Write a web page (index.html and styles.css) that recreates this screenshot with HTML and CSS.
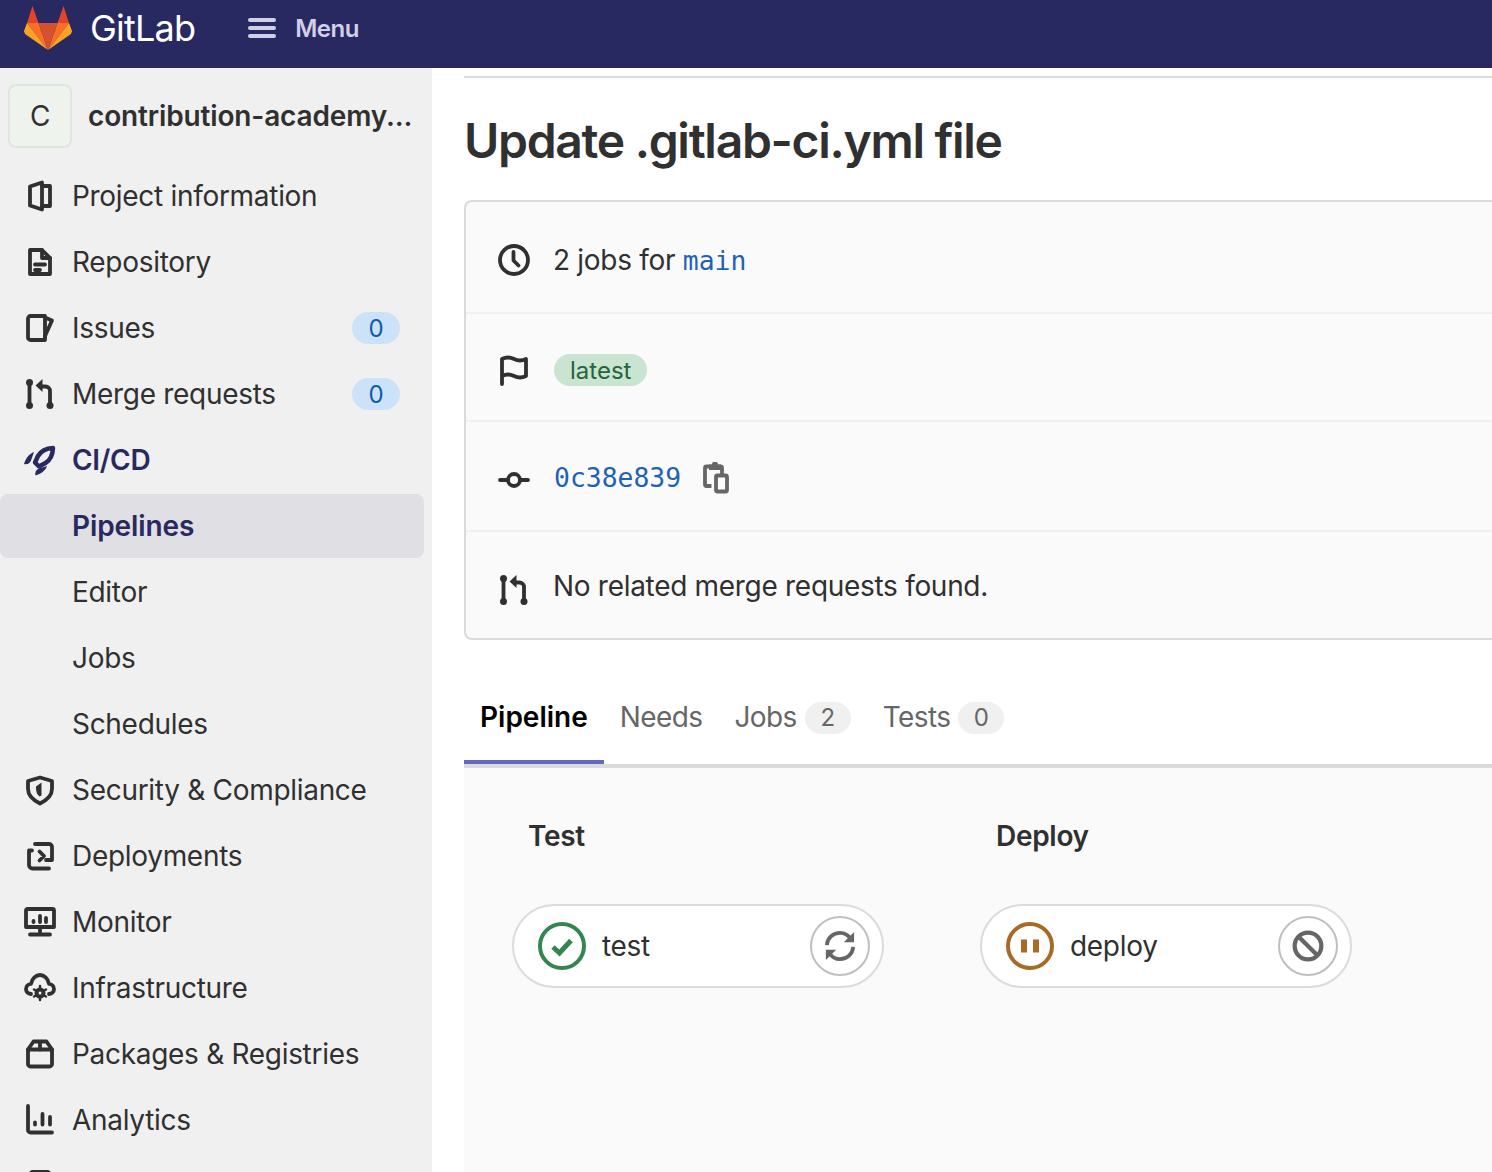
FILE: index.html
```html
<!DOCTYPE html>
<html lang="en">
<head>
<meta charset="utf-8">
<title>Update .gitlab-ci.yml file</title>
<link rel="stylesheet" href="styles.css">
</head>
<body>
<header class="topbar">
  <svg class="logo" viewBox="0 0 48 44" width="48" height="44">
    <polygon fill="#e24329" points="8.5,0 14.5,17 3,17"/>
    <polygon fill="#e24329" points="39.5,0 33.5,17 45,17"/>
    <polygon fill="#fc6d26" points="3,17 14.5,17 24,44"/>
    <polygon fill="#fc6d26" points="45,17 33.5,17 24,44"/>
    <polygon fill="#fca326" points="3,17 0,25 1,28 24,44"/>
    <polygon fill="#fca326" points="45,17 48,25 47,28 24,44"/>
    <polygon fill="#d4512f" points="14.5,17 33.5,17 24,44"/>
  </svg>
  <span class="wordmark">GitLab</span>
  <div class="menu">
    <svg class="burger" viewBox="0 0 28 20" width="28" height="20"><path d="M2 2h24M2 10h24M2 18h24"/></svg>
    <span>Menu</span>
  </div>
</header>
<div class="layout">
  <nav class="sidebar">
    <div class="context">
      <div class="avatar">C</div>
      <div class="context-name">contribution-academy...</div>
    </div>
    <ul class="nav">
      <li class="nav-item"><svg class="icon" viewBox="0 0 32 32"><path d="M6 6.500 18 2.500v27L6 25.500z"/><path d="M18 6h8v20h-8"/></svg><span>Project information</span></li>
      <li class="nav-item"><svg class="icon" viewBox="0 0 32 32"><path d="M6 4h12l8 8v16H6z"/><path d="M18 4v8h8M11 18.500h10M11 24h5"/></svg><span>Repository</span></li>
      <li class="nav-item"><svg class="icon" viewBox="0 0 32 32"><path d="M6.500 4H21v24H6.500A2.500 2.500 0 0 1 4 25.500v-19A2.500 2.500 0 0 1 6.500 4z"/><path d="M21 5.500l7 3L21 24"/></svg><span>Issues</span><b class="count">0</b></li>
      <li class="nav-item"><svg class="icon" viewBox="0 0 32 32"><use href="#mr"/></svg><span>Merge requests</span><b class="count">0</b></li>
      <li class="nav-item current"><svg class="icon rocket" viewBox="0 0 32 32"><path d="M29 4c-7 .3-12 3-15 8l-3 6.500 4 4 6.500-3.500c5-3 7.200-8 7.500-15z"/><path class="solid" d="M10 8C5 10 2 14 0 20c3.500.8 6-1 7-3.500L10 8zM23 22c-1.500 4.500-6 8-11.500 9.500-.8-3.500 1-6 3.500-7L23 22z"/></svg><span>CI/CD</span></li>
      <li class="nav-item sub active"><span>Pipelines</span></li>
      <li class="nav-item sub"><span>Editor</span></li>
      <li class="nav-item sub"><span>Jobs</span></li>
      <li class="nav-item sub"><span>Schedules</span></li>
      <li class="nav-item"><svg class="icon" viewBox="0 0 32 32"><path d="M16 3.500l12 3.500v8c0 6.500-5 11-12 14.500C9 26 4 21.500 4 15V7z"/><path class="solid" d="M17.500 8.500v13l-2 1c-3-2.500-3.500-5.500-3.500-10z"/></svg><span>Security &amp; Compliance</span></li>
      <li class="nav-item"><svg class="icon" viewBox="0 0 32 32"><path d="M11 4h14a3 3 0 0 1 3 3v13h-6M5 10.500h3M5 10.500V25a3.500 3.500 0 0 0 3.500 3.500H25M15.500 11.500l4.500 4.500-4.500 4.500"/></svg><span>Deployments</span></li>
      <li class="nav-item"><svg class="icon" viewBox="0 0 32 32"><path d="M2 4.500a1.500 1.500 0 0 1 1.500-1.500h25A1.500 1.500 0 0 1 30 4.500v16.500H2z"/><path d="M16 22v5M6 28.500h20M9.500 15v1M16 10v6M22 12v4"/></svg><span>Monitor</span></li>
      <li class="nav-item"><svg class="icon" viewBox="0 0 32 32"><path d="M7 22c-3-.3-5-2.500-5-5s2-5 5-5.200C8 6.500 12 3 16 3s8 3.500 9 8.800c3 .2 5 2.700 5 5.200s-2 4.700-5 5"/><circle cx="16" cy="21" r="3.500" stroke-width="4"/><path d="M16 14v2M16 26v2M10 17.500l2 1M22 17.500l-2 1M10 24.500l2-1M22 24.500l-2-1" stroke-width="2.500"/></svg><span>Infrastructure</span></li>
      <li class="nav-item"><svg class="icon" viewBox="0 0 32 32"><path d="M4 11.500h24V26a2.500 2.500 0 0 1-2.500 2.500h-19A2.500 2.500 0 0 1 4 26z"/><path d="M4 11.500 9.500 3.500h13l5.500 8M16 4v7.500"/></svg><span>Packages &amp; Registries</span></li>
      <li class="nav-item"><svg class="icon" viewBox="0 0 32 32"><path d="M4 2v24a2.500 2.500 0 0 0 2.500 2.500H28M11 18.500v2M18.500 10v10.500M26 13v7.500"/></svg><span>Analytics</span></li>
      <li class="nav-item"><svg class="icon" viewBox="0 0 32 32"><path d="M9 2h14a3 3 0 0 1 3 3v22H9a3 3 0 0 1-3-3V5a3 3 0 0 1 3-3z"/></svg></li>
    </ul>
  </nav>
  <main class="content">
    <h1 class="title">Update .gitlab-ci.yml file</h1>
    <section class="info-card">
      <div class="info-row row-jobs">
        <svg class="icon" viewBox="0 0 32 32"><circle cx="16" cy="16" r="14"/><path d="M15.500 8v8.500l5 5"/></svg>
        <span class="row-text">2 jobs for <a class="mono">main</a></span>
      </div>
      <div class="info-row row-tag">
        <svg class="icon" viewBox="0 0 32 32"><path d="M4 30V5c4-2 8-2 12 0s8 2 12 0v17c-4 2-8 2-12 0s-8-2-12 0"/></svg>
        <span class="tag">latest</span>
      </div>
      <div class="info-row row-sha">
        <svg class="icon" viewBox="0 0 32 32"><circle cx="16" cy="16" r="6"/><path d="M2 16h8M22 16h8"/></svg>
        <a class="mono">0c38e839</a>
        <svg class="copy" viewBox="0 0 26 32"><path d="M8.500 24H3.500a1.500 1.500 0 0 1-1.500-1.500V6a1.500 1.500 0 0 1 1.500-1.500h14A1.500 1.500 0 0 1 19 6v7"/><path class="solid" d="M6 2.500h3a3 3 0 0 1 6 0h3V8H6z"/><rect x="13" y="13.500" width="11" height="16" rx="1.500"/></svg>
      </div>
      <div class="info-row row-mr">
        <svg class="icon" viewBox="0 0 32 32"><use href="#mr"/></svg>
        <span class="row-text">No related merge requests found.</span>
      </div>
    </section>
    <div class="tabs">
      <div class="tab selected">Pipeline</div>
      <div class="tab">Needs</div>
      <div class="tab">Jobs<span class="tab-count">2</span></div>
      <div class="tab">Tests<span class="tab-count">0</span></div>
    </div>
    <section class="graph">
      <div class="stage">
        <h2 class="stage-name">Test</h2>
        <div class="job">
          <svg class="status" viewBox="0 0 48 48"><circle class="ok" cx="24" cy="24" r="22"/><path class="ok-mark" d="M15 25l6.500 6L33 18.500"/></svg>
          <span class="job-name">test</span>
          <span class="job-action"><svg class="action-icon" viewBox="0 0 34 34"><path d="M3 16C3.500 8.500 9.500 3 17 3c4.500 0 8.500 2 11 6M31 18c-.5 7.500-6.500 13-14 13-4.500 0-8.500-2-11-6"/><path class="solid" d="M32 2v11H21zM2 32V21h11z"/></svg></span>
        </div>
      </div>
      <div class="stage">
        <h2 class="stage-name">Deploy</h2>
        <div class="job">
          <svg class="status" viewBox="0 0 48 48"><circle class="wait" cx="24" cy="24" r="22"/><path class="wait-mark" d="M18 17.500v13M30 17.500v13"/></svg>
          <span class="job-name">deploy</span>
          <span class="job-action"><svg class="action-icon" viewBox="0 0 30 30"><circle cx="15" cy="15" r="12.500"/><path d="M6.500 6.500l17 17"/></svg></span>
        </div>
      </div>
    </section>
  </main>
</div>
<svg class="defs" width="0" height="0"><defs>
  <g id="mr"><circle class="solid" cx="5.500" cy="4.500" r="3.500"/><circle class="solid" cx="5.500" cy="27.500" r="3.500"/><circle class="solid" cx="26" cy="27.500" r="3.500"/><path d="M5.500 4.500v23M26 27.500V13a4.500 4.500 0 0 0-4.500-4.500H18"/><path class="solid" d="M18.500 1v13l-7-6.500z"/></g>
</defs></svg>
</body>
</html>
```

FILE: styles.css
```css
* { box-sizing: border-box; }
html, body { margin: 0; height: 1172px; overflow: hidden; }
body { font-family: Inter, "Noto Sans", sans-serif; font-size: 28px; letter-spacing: -0.3px; color: #303030; background: #fff; }
ul { list-style: none; margin: 0; padding: 0; }
h1, h2 { margin: 0; }
.defs { position: absolute; }

.topbar { height: 68px; background: #292961; display: flex; align-items: flex-start; padding-left: 24px; }
.logo { display: block; margin-top: 6px; }
.wordmark { margin-left: 18px; margin-top: 6px; color: #fff; font-size: 36px; line-height: 44px; font-weight: 400; letter-spacing: -0.8px; }
.menu { display: flex; align-items: center; gap: 19px; height: 56px; margin-left: 53px; color: #d1d0e9; font-size: 24px; font-weight: 600; letter-spacing: -0.5px; }
.burger { fill: none; stroke: #d1d0e9; stroke-width: 4; stroke-linecap: round; }

.icon { width: 32px; height: 32px; flex: none; fill: none; stroke: #303030; stroke-width: 3.800; stroke-linecap: round; stroke-linejoin: round; }
.solid { fill: #303030; stroke: none; }

.layout { display: flex; height: 1104px; overflow: hidden; }
.sidebar { width: 432px; flex: none; background: #f0f0f0; padding-top: 16px; overflow: hidden; }
.context { display: flex; align-items: center; gap: 16px; height: 64px; padding-left: 8px; margin-bottom: 16px; }
.avatar { width: 64px; height: 64px; display: flex; align-items: center; justify-content: center; background: #eef3ee; border: 2px solid #dfe5df; border-radius: 8px; font-size: 28px; }
.context-name { font-weight: 600; letter-spacing: -0.15px; }
.nav-item { height: 64px; margin: 0 8px 2px 0; padding-left: 24px; padding-right: 24px; display: flex; align-items: center; gap: 16px; border-radius: 8px; white-space: nowrap; }
.sub { padding-left: 72px; }
.current, .active { color: #292961; font-weight: 600; }
.active { letter-spacing: -0.1px; }
.current .icon { stroke: #292961; }
.current .rocket { stroke-width: 4.500; }
.current .solid { fill: #292961; }
.active { background: #dfdfe4; }
.count { margin-left: auto; min-width: 48px; height: 32px; display: flex; align-items: center; justify-content: center; border-radius: 16px; background: #cbe2f9; color: #0b5cad; font-size: 24px; font-weight: 400; letter-spacing: 0; }

.content { flex: 1; min-width: 0; margin-left: 32px; }
.title { margin-top: 8px; border-top: 2px solid #dbdbdb; padding: 34px 0 30px; font-size: 48px; line-height: 58px; font-weight: 600; letter-spacing: -1.3px; white-space: nowrap; }
.info-card { height: 440px; background: #fafafa; border: 2px solid #dbdbdb; border-right: 0; border-radius: 8px 0 0 8px; display: flex; flex-direction: column; }
.info-row { display: flex; align-items: center; gap: 24px; padding-left: 32px; border-bottom: 2px solid #f0f0f0; }
.info-row:last-child { border-bottom: 0; }
.row-text { margin-left: -1px; }
.row-jobs { height: 112px; padding-top: 6px; }
.row-tag { height: 108px; padding-top: 6px; }
.row-sha { height: 110px; padding-top: 2px; }
.row-sha .icon { margin-top: 6px; }
.row-mr { height: 106px; padding-top: 2px; }
.row-mr .icon { margin-top: 8px; }
.mono { font-family: "DejaVu Sans Mono", "Liberation Mono", monospace; font-size: 26.400px; letter-spacing: 0; color: #1f62b5; }
.tag { height: 32px; padding: 0 16px; display: flex; align-items: center; border-radius: 16px; background: #c9e4d0; color: #24663b; font-size: 24px; letter-spacing: 0; }
.copy { width: 26px; height: 32px; margin-left: -2px; margin-top: 2px; fill: none; stroke: #666; stroke-width: 3.800; }
.copy .solid { fill: #666; }

.tabs { display: flex; height: 128px; padding-top: 60px; border-bottom: 4px solid #dbdbdb; }
.tab { height: 64px; padding: 0 16px; color: #666; display: flex; align-items: flex-start; line-height: 34px; letter-spacing: -0.6px; }
.tab.selected { color: #000; font-weight: 600; letter-spacing: 0; border-bottom: 4px solid #6666c4; }
.tab-count { margin: 2px 0 0 8px; min-width: 46px; height: 32px; display: flex; align-items: center; justify-content: center; border-radius: 16px; background: #f0f0f0; color: #666; font-size: 24px; letter-spacing: 0; }

.graph { display: flex; height: 500px; background: #fafafa; padding: 51px 0 0 48px; }
.stage { width: 468px; flex: none; }
.stage-name { font-size: 28px; line-height: 34px; font-weight: 600; padding-left: 16px; margin-bottom: 51px; }
.job { width: 372px; height: 84px; padding: 0 12px 0 24px; display: flex; align-items: center; background: #fff; border: 2px solid #dbdbdb; border-radius: 42px; }
.status { width: 48px; height: 48px; flex: none; fill: none; }
.ok { stroke: #358553; stroke-width: 4; }
.ok-mark { stroke: #358553; stroke-width: 5; }
.wait { stroke: #a96a28; stroke-width: 4; }
.wait-mark { stroke: #a96a28; stroke-width: 6; }
.job-name { margin-left: 16px; }
.job-action { margin-left: auto; width: 60px; height: 60px; display: flex; align-items: center; justify-content: center; border: 2px solid #bfbfbf; border-radius: 50%; }
.action-icon { width: 32px; height: 32px; fill: none; stroke: #666; stroke-width: 4; }
.action-icon .solid { fill: #666; }
```
